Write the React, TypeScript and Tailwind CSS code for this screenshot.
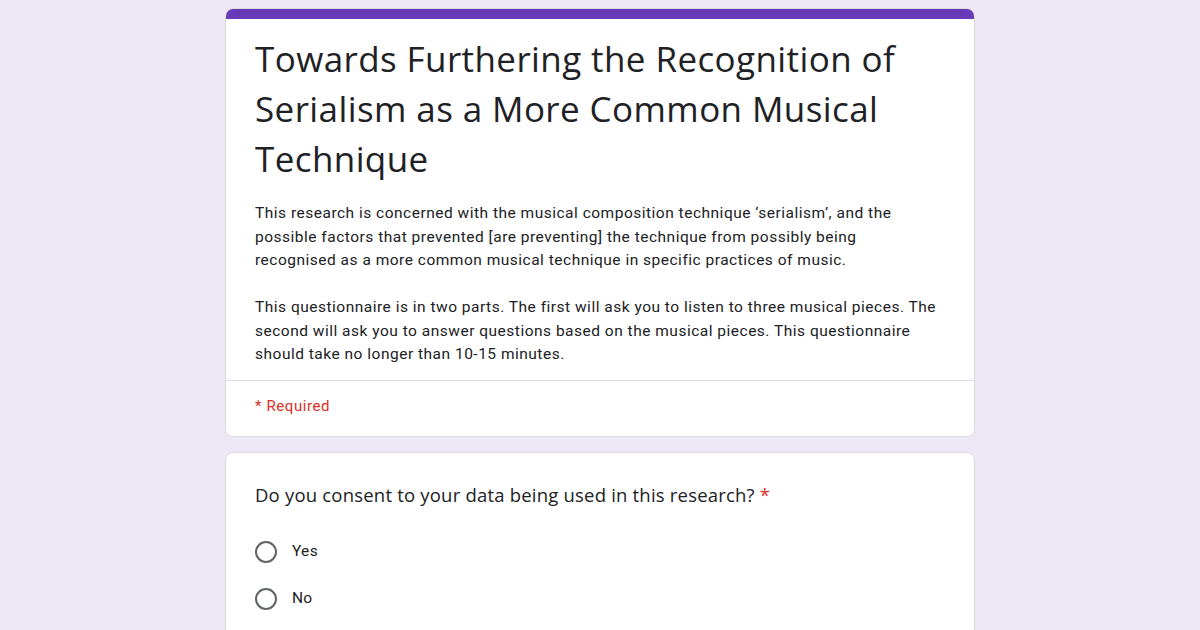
import React from 'react';

const Radio = ({ label }: { label: string }) => (
  <label className="flex items-center h-[47px] gap-[15px]">
    <span className="w-[22px] h-[22px] rounded-full border-2 border-[#5f6368] shrink-0" />
    <span className="text-[15.5px] tracking-[0.3px] text-[#202124]" style={{ fontFamily: 'Roboto, sans-serif' }}>
      {label}
    </span>
  </label>
);

const description =
  "This research is concerned with the musical composition technique ‘serialism’, and the\n" +
  "possible factors that prevented [are preventing] the technique from possibly being\n" +
  "recognised as a more common musical technique in specific practices of music.\n\n" +
  "This questionnaire is in two parts. The first will ask you to listen to three musical pieces. The\n" +
  "second will ask you to answer questions based on the musical pieces. This questionnaire\n" +
  "should take no longer than 10-15 minutes.";

export default function App() {
  return (
    <div className="w-[1200px] h-[630px] overflow-hidden bg-[#ede7f6]" style={{ fontFamily: 'Roboto, sans-serif' }}>
      <div className="w-[750px] mx-auto pt-[8px] flex flex-col gap-[15px]">

        {/* ── Header card ── */}
        <div className="bg-white rounded-lg border border-[#dadce0] overflow-hidden">
          <div className="h-[10px] bg-[#673ab7]" />
          <div className="px-[29px] pt-[15px] pb-[13px] border-b border-[#dadce0]">
            <h1
              className="text-[35px] leading-[50px] text-[#202124] tracking-[0.4px]"
              style={{ fontFamily: '"Open Sans", sans-serif' }}
            >
              Towards Furthering the Recognition of Serialism as a More Common Musical Technique
            </h1>
            <p className="mt-[18px] text-[15.5px] leading-[23.5px] tracking-[0.5px] text-[#202124] whitespace-pre">
              {description}
            </p>
          </div>
          <div className="px-[29px] h-[55px] pt-[14px]">
            <span className="block text-[15px] leading-[22px] tracking-[0.6px] text-[#d93025]">* Required</span>
          </div>
        </div>

        {/* ── Question card ── */}
        <div className="bg-white rounded-lg border border-[#dadce0] px-[29px] pt-[28px] pb-[24px]">
          <p
            className="text-[18.5px] leading-[28px] tracking-[0.2px] text-[#202124]"
            style={{ fontFamily: '"Open Sans", sans-serif' }}
          >
            Do you consent to your data being used in this research? <span className="text-[#d93025]">*</span>
          </p>
          <div className="mt-[20px] flex flex-col">
            <Radio label="Yes" />
            <Radio label="No" />
          </div>
        </div>

      </div>
    </div>
  );
}
